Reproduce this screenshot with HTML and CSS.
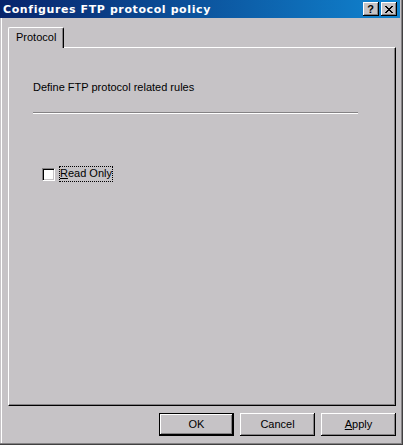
FILE: index.html
```html
<!DOCTYPE html>
<html lang="en">

<head>
    <meta charset="UTF-8">
    <title>Configures FTP protocol policy</title>
    <link rel="stylesheet" href="styles.css">
</head>

<body>
    <div class="dialog">
        <div class="title-bar">
            <span class="title-text">Configures FTP protocol policy</span>
            <div class="caption-btns">
                <button class="caption-btn help" type="button">?</button>
                <button class="caption-btn close" type="button" aria-label="Close">
                    <svg width="8" height="7" viewBox="0 0 8 7">
                        <path d="M0 0h2v1h1v1h2V1h1V0h2v1H7v1H6v1H5v1h1v1h1v1h1v1H6V6H5V5H3v1H2v1H0V6h1V5h1V4h1V3H2V2H1V1H0z" fill="#000" />
                    </svg>
                </button>
            </div>
        </div>
        <div class="client">
            <div class="tab-strip">
                <div class="tab">Protocol</div>
            </div>
            <div class="tab-panel">
                <p class="panel-desc">Define FTP protocol related rules</p>
                <div class="etched-line"></div>
                <label class="check-row">
                    <span class="check-box"></span>
                    <span class="check-label"><u>R</u>ead Only</span>
                </label>
            </div>
            <div class="dialog-buttons">
                <button class="push-btn default" type="button">OK</button>
                <button class="push-btn" type="button">Cancel</button>
                <button class="push-btn" type="button"><u>A</u>pply</button>
            </div>
        </div>
    </div>
</body>

</html>
```

FILE: styles.css
```css
body {
    --face: #c6c3c6;
    --shadow: #848284;
    --dark: #000;
    --light: #fff;
}

body,
body * {
    padding: 0;
    margin: 0;
    box-sizing: border-box;
    font-family: 'Liberation Sans', Arial, sans-serif;
    font-size: 11px;
}

body {
    background-color: var(--face);
}

.dialog {
    width: 403px;
    height: 445px;
    background-color: var(--face);
    border-right: 1px solid #424142;
    border-bottom: 1px solid #424142;
    box-shadow: inset -1px -1px 0 var(--shadow);
    display: flex;
    flex-direction: column;
}

/* title bar */
.title-bar {
    width: 400px;
    height: 18px;
    flex: none;
    display: flex;
    align-items: center;
    justify-content: space-between;
    padding-left: 3px;
    padding-right: 3px;
    background: linear-gradient(to right, #08246b, #1084d0);
}

.title-text {
    color: #fff;
    font-family: 'DejaVu Sans', Verdana, sans-serif;
    font-weight: bold;
    font-size: 11px;
    letter-spacing: 0.6px;
    line-height: 13px;
    white-space: nowrap;
}

.caption-btns {
    display: flex;
    gap: 2px;
}

.caption-btn {
    width: 16px;
    height: 14px;
    background-color: var(--face);
    border: none;
    box-shadow: inset -1px -1px 0 var(--dark), inset 1px 1px 0 var(--light), inset -2px -2px 0 var(--shadow);
    display: grid;
    place-items: center;
    font-weight: bold;
    font-size: 11px;
    line-height: 11px;
    color: #000;
}

.caption-btn.help {
    padding-right: 1px;
}

.caption-btn.close svg {
    display: block;
}

/* client area */
.client {
    flex: 1;
    margin-left: 1px;
    margin-bottom: 1px;
    border-left: 1px solid var(--light);
    padding: 9px 6px 0 6px;
    display: flex;
    flex-direction: column;
}

.tab-strip {
    display: flex;
    height: 20px;
    position: relative;
    z-index: 1;
}

.tab {
    width: 56px;
    height: 21px;
    background-color: var(--face);
    border-left: 1px solid var(--light);
    border-top: 1px solid var(--light);
    border-right: 1px solid var(--dark);
    border-top-left-radius: 2px;
    border-top-right-radius: 2px;
    box-shadow: inset -1px 0 0 var(--shadow);
    padding: 3px 0 0 7px;
    line-height: 13px;
    color: #000;
}

.tab-panel {
    width: 388px;
    height: 359px;
    border-left: 1px solid var(--light);
    border-top: 1px solid var(--light);
    border-right: 1px solid var(--dark);
    border-bottom: 1px solid var(--dark);
    box-shadow: inset -1px -1px 0 var(--shadow);
    padding: 33px 0 0 24px;
}

.panel-desc {
    line-height: 13px;
    color: #000;
}

.etched-line {
    width: 325px;
    height: 2px;
    margin-top: 18px;
    border-top: 1px solid var(--shadow);
    border-bottom: 1px solid var(--light);
}

.check-row {
    display: flex;
    align-items: center;
    gap: 4px;
    margin-top: 52px;
    margin-left: 9px;
}

.check-box {
    width: 13px;
    height: 13px;
    background-color: #fff;
    border-top: 1px solid var(--shadow);
    border-left: 1px solid var(--shadow);
    border-right: 1px solid var(--light);
    border-bottom: 1px solid var(--light);
    box-shadow: inset 1px 1px 0 var(--dark), inset -1px -1px 0 var(--face);
}

.check-label {
    height: 16px;
    padding: 1px 1px 0 1px;
    line-height: 13px;
    outline: 1px dotted #000;
    outline-offset: -1px;
    color: #000;
}

/* buttons */
.dialog-buttons {
    width: 388px;
    display: flex;
    justify-content: flex-end;
    gap: 6px;
    margin-top: 7px;
}

.push-btn {
    width: 75px;
    height: 23px;
    background-color: var(--face);
    border: none;
    box-shadow: inset -1px -1px 0 var(--dark), inset 1px 1px 0 var(--light), inset -2px -2px 0 var(--shadow);
    color: #000;
    line-height: 13px;
}

.push-btn.default {
    border: 1px solid var(--dark);
}
```
